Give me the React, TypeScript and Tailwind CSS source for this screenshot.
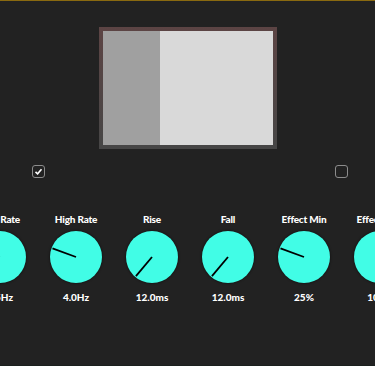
import React from "react";

type KnobProps = { label: string; value: string; angle: number };

function Knob({ label, value, angle }: KnobProps) {
  const r = 25;
  const a = (angle * Math.PI) / 180;
  const x2 = 26 + r * Math.sin(a);
  const y2 = 26 - r * Math.cos(a);
  return (
    <div className="w-[76px] shrink-0 flex flex-col items-center">
      <div className="text-[10px] leading-[12px] font-black text-white whitespace-nowrap tracking-[-0.2px]">{label}</div>
      <div className="mt-[6px] w-[52px] h-[52px] rounded-full bg-[#41fde6] shadow-[0_0_2px_1px_rgba(0,0,0,0.3)] relative">
        <svg width="52" height="52" viewBox="0 0 52 52" className="absolute inset-0">
          <line x1="26" y1="26" x2={x2} y2={y2} stroke="#000" strokeWidth="1.8" />
        </svg>
      </div>
      <div className="mt-[8px] text-[10px] leading-[12px] font-black text-white whitespace-nowrap">{value}</div>
    </div>
  );
}

function Checkbox({ checked }: { checked: boolean }) {
  return (
    <div className="w-[13px] h-[13px] rounded-[3px] border border-[#8c8c8c] flex items-center justify-center">
      {checked && (
        <svg width="9" height="9" viewBox="0 0 9 9">
          <path d="M1.5 4.8 L3.6 6.8 L7.5 2.2" fill="none" stroke="#fff" strokeWidth="1.6" />
        </svg>
      )}
    </div>
  );
}

export default function App() {
  const knobs: KnobProps[] = [
    { label: "Low Rate", value: "0.5Hz", angle: -85 },
    { label: "High Rate", value: "4.0Hz", angle: -70 },
    { label: "Rise", value: "12.0ms", angle: -140 },
    { label: "Fall", value: "12.0ms", angle: -140 },
    { label: "Effect Min", value: "25%", angle: -70 },
    { label: "Effect Max", value: "100%", angle: 135 },
  ];
  return (
    <div
      className="w-[375px] h-[366px] bg-[#222222] overflow-hidden border-t border-[#8a6a10] border-b border-b-[#1b201e] flex flex-col"
      style={{ fontFamily: "Lato, 'Open Sans', sans-serif" }}
    >
      <div className="ml-[99px] mt-[26px] w-[178px] h-[122px] p-[4px] bg-gradient-to-b from-[#5c4444] to-[#464646] shrink-0">
        <div className="flex h-full">
          <div className="w-[57px] bg-[#a0a0a0]" />
          <div className="flex-1 bg-[#d9d9d9]" />
        </div>
      </div>
      <div className="flex justify-between pl-[32px] pr-[27px] mt-[16px]">
        <Checkbox checked />
        <Checkbox checked={false} />
      </div>
      <div className="flex ml-[-38px] mt-[35px]">
        {knobs.map((k) => (
          <Knob key={k.label} {...k} />
        ))}
      </div>
    </div>
  );
}
